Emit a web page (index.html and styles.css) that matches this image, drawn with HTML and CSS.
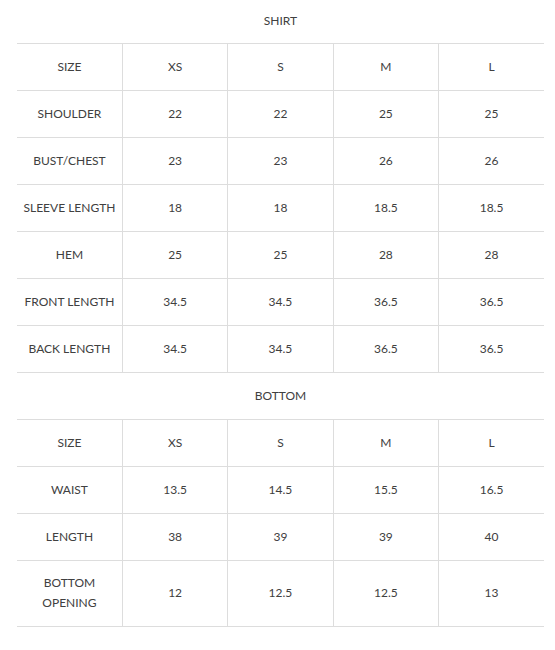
FILE: index.html
```html
<!DOCTYPE html>
<html>
<head>
<meta charset="utf-8">
<link rel="stylesheet" href="styles.css">
</head>
<body>
<div class="wrap">
<table class="chart">
  <tr class="title first"><td colspan="5">SHIRT</td></tr>
  <tr><td>SIZE</td><td>XS</td><td>S</td><td>M</td><td>L</td></tr>
  <tr><td>SHOULDER</td><td>22</td><td>22</td><td>25</td><td>25</td></tr>
  <tr><td>BUST/CHEST</td><td>23</td><td>23</td><td>26</td><td>26</td></tr>
  <tr><td>SLEEVE LENGTH</td><td>18</td><td>18</td><td>18.5</td><td>18.5</td></tr>
  <tr><td>HEM</td><td>25</td><td>25</td><td>28</td><td>28</td></tr>
  <tr><td>FRONT LENGTH</td><td>34.5</td><td>34.5</td><td>36.5</td><td>36.5</td></tr>
  <tr><td>BACK LENGTH</td><td>34.5</td><td>34.5</td><td>36.5</td><td>36.5</td></tr>
  <tr class="title"><td colspan="5">BOTTOM</td></tr>
  <tr><td>SIZE</td><td>XS</td><td>S</td><td>M</td><td>L</td></tr>
  <tr><td>WAIST</td><td>13.5</td><td>14.5</td><td>15.5</td><td>16.5</td></tr>
  <tr><td>LENGTH</td><td>38</td><td>39</td><td>39</td><td>40</td></tr>
  <tr class="tall"><td>BOTTOM<br>OPENING</td><td>12</td><td>12.5</td><td>12.5</td><td>13</td></tr>
</table>
</div>
</body>
</html>
```

FILE: styles.css
```css
html, body {
  margin: 0;
  padding: 0;
  background: #ffffff;
}
.wrap {
  padding: 0 11px 0 17px;
  margin-top: -4px;
}
.chart {
  width: 527px;
  border-collapse: collapse;
  table-layout: fixed;
  font-family: Lato, "Open Sans", sans-serif;
  font-size: 12px;
  color: #404040;
}
.chart td {
  height: 47px;
  padding: 0 4px;
  text-align: center;
  vertical-align: middle;
  line-height: 20px;
  border-bottom: 1px solid #dddddd;
  border-left: 1px solid #dddddd;
  box-sizing: border-box;
}
.chart td:first-child {
  border-left: none;
}
.chart tr.title td {
  border-left: none;
}
.chart tr.first td {
  padding-top: 4px;
}
.chart tr.tall td {
  height: 66px;
}
```
